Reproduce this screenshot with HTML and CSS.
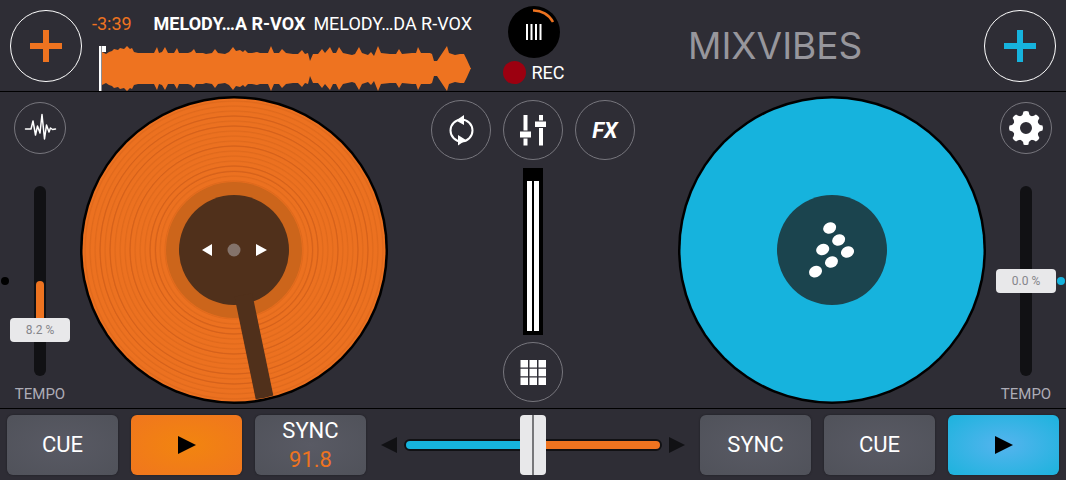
FILE: index.html
```
<!DOCTYPE html>
<html lang="en">

<head>
  <meta charset="UTF-8">
  <meta name="viewport" content="width=device-width, initial-scale=1">
  <title>Mixvibes</title>
  <link rel="stylesheet" href="styles.css">
</head>

<body>
  <header class="topbar">
    <div class="deck-info">
      <button class="add add-a" type="button" aria-label="Load track on deck A">
        <svg width="32" height="32" viewBox="0 0 32 32"><path d="M16 0v32M0 16h32" /></svg>
      </button>
      <div class="track">
        <div class="track-text">
          <span class="time">-3:39</span>
          <strong>MELODY…A R-VOX</strong>
          <span>MELODY…DA R-VOX</span>
        </div>
        <svg class="waveform" viewBox="0 0 373 45" preserveAspectRatio="none">
          <path id="wave" fill="#ee7320" d="M3 23V6L7 8L10 6L13 5L15 3L19 4L21 2L25 3L28 0L31 3L33 2L35 6L39 7L55 7L58 1L60 7L63 6L66 1L69 7L75 7L78 2L80 7L89 7L92 6L95 3L97 7L104 7L107 8L113 7L116 3L119 7L126 8L130 6L134 1L137 5L141 4L144 6L146 4L149 7L153 7L158 6L161 7L169 7L172 0L175 7L180 7L183 3L187 7L194 8L199 8L203 4L206 8L209 7L211 15L214 8L219 8L223 3L226 7L231 1L234 7L237 7L240 1L244 7L253 9L256 8L260 1L263 7L269 9L272 6L275 10L279 0L282 7L291 8L297 8L300 3L303 8L313 7L317 7L319 1L322 7L331 7L333 8L335 15L338 15L342 9L348 0L350 7L356 9L361 8L365 8L368 14L372 23Z" />
          <use href="#wave" transform="matrix(1 0 0 -1 0 45)" />
          <path fill="#fff" d="M0 0h7v6H3v39H0z" />
          <path fill="#8d8d92" d="M2 0h1v45H2z" />
        </svg>
      </div>
    </div>

    <div class="master">
      <button class="dial" type="button" aria-label="Master volume">
        <svg width="52" height="52" viewBox="0 0 52 52">
          <path d="M25 4.500A21.500 21.500 0 0 1 45 16" fill="none" stroke="#ee7320" stroke-width="2.500" />
          <path d="M19 18v16M23.500 18v16M28 18v16M32.500 18v16" stroke="#fff" stroke-width="2" />
        </svg>
      </button>
      <button class="rec" type="button"><span class="rec-dot"></span>REC</button>
    </div>

    <div class="brand">
      <span class="logo">MIXVIBES</span>
      <button class="add add-b" type="button" aria-label="Load track on deck B">
        <svg width="32" height="32" viewBox="0 0 32 32"><path d="M16 0v32M0 16h32" /></svg>
      </button>
    </div>
  </header>

  <main class="decks">
    <section class="side side-a">
      <button class="round small" type="button" aria-label="Waveform view">
        <svg width="50" height="50" viewBox="0 0 50 50">
          <path d="M10.500 26H16L18 18L20.500 32L22.500 23L25 30L27 11.500L29.500 36L31.500 22L34 29L35.500 25L37.500 26.500L40.500 26" fill="none" stroke="#fff" stroke-width="1.500" stroke-linejoin="round" stroke-linecap="round" />
        </svg>
      </button>
      <div class="pitch" style="--value: 8.2">
        <input type="range" id="tempo-a" min="-14" max="14" step="0.1" value="8.2">
        <output for="tempo-a">8.2 %</output>
      </div>
      <label for="tempo-a">TEMPO</label>
    </section>

    <svg class="platter" viewBox="0 0 308 308" role="img" aria-label="Deck A">
      <defs>
        <radialGradient id="grooves" gradientUnits="userSpaceOnUse" cx="154" cy="154" r="5" spreadMethod="repeat">
          <stop offset="0" stop-color="#ec7120" />
          <stop offset="0.500" stop-color="#ec7120" />
          <stop offset="0.800" stop-color="#df691c" />
          <stop offset="1" stop-color="#ec7120" />
        </radialGradient>
      </defs>
      <circle cx="154" cy="154" r="154" fill="#000" />
      <circle cx="154" cy="154" r="151.500" fill="url(#grooves)" />
      <g fill="none" stroke="#d5611b">
        <circle cx="154" cy="154" r="78.500" />
        <circle cx="154" cy="154" r="84" />
        <circle cx="154" cy="154" r="104" />
        <circle cx="154" cy="154" r="124" />
        <circle cx="154" cy="154" r="134" />
      </g>
      <circle cx="154" cy="154" r="68" fill="#cc651b" />
      <circle cx="154" cy="154" r="55" fill="#50301b" />
      <path d="M145 200h18v104.500q-9 1-18 0z" fill="#50301b" transform="rotate(-11.700 154 154)" />
      <circle cx="154" cy="154" r="6.500" fill="#84736b" />
      <path d="M122 154l10-6v12zM187 154l-11-6v12z" fill="#fff" />
    </svg>

    <section class="mixer">
      <div class="tools">
        <button class="round" type="button" aria-label="Loop">
          <svg width="60" height="60" viewBox="0 0 60 60">
            <circle cx="30.500" cy="30.500" r="11" fill="none" stroke="#fff" stroke-width="2" />
            <path d="M25 20.500L33 15v10zM35 40L27 45.500V35z" fill="#fff" />
          </svg>
        </button>
        <button class="round" type="button" aria-label="Equalizer">
          <svg width="60" height="60" viewBox="0 0 60 60" fill="#fff">
            <path d="M20.500 15h4v15.500h-4zM17 31.500h11v6H17zM20.500 38.500h4v7h-4zM36 15h4v5.500h-4zM32 21.500h11v5.500H32zM36 28h4v17.500h-4z" />
          </svg>
        </button>
        <button class="round fx" type="button">FX</button>
      </div>
      <div class="meter"><span></span><span></span></div>
      <button class="round" type="button" aria-label="Sampler pads">
        <svg width="60" height="60" viewBox="0 0 60 60" fill="#fff">
          <path d="M17.500 18h7.500v7.500h-7.500zM26.500 18h7.500v7.500h-7.500zM35.500 18h7.500v7.500h-7.500zM17.500 26.700h7.500v7.500h-7.500zM26.500 26.700h7.500v7.500h-7.500zM35.500 26.700h7.500v7.500h-7.500zM17.500 35.500h7.500v7.500h-7.500zM26.500 35.500h7.500v7.500h-7.500zM35.500 35.500h7.500v7.500h-7.500z" />
        </svg>
      </button>
    </section>

    <svg class="platter" viewBox="0 0 308 308" role="img" aria-label="Deck B">
      <circle cx="154" cy="154" r="154" fill="#000" />
      <circle cx="154" cy="154" r="151.500" fill="#16b3dd" />
      <circle cx="154" cy="154" r="55" fill="#1b444e" />
      <g fill="#fff">
        <ellipse cx="151.700" cy="132" rx="6.700" ry="5.600" transform="rotate(-25 151.700 132)" />
        <ellipse cx="160.700" cy="144" rx="6.700" ry="5.600" transform="rotate(-25 160.700 144)" />
        <ellipse cx="144.700" cy="153.500" rx="6.700" ry="5.600" transform="rotate(-25 144.700 153.500)" />
        <ellipse cx="169.500" cy="156" rx="6.700" ry="5.600" transform="rotate(-25 169.500 156)" />
        <ellipse cx="153.500" cy="166" rx="6.700" ry="5.600" transform="rotate(-25 153.500 166)" />
        <ellipse cx="137.500" cy="175.700" rx="6.700" ry="5.600" transform="rotate(-25 137.500 175.700)" />
      </g>
    </svg>

    <section class="side side-b">
      <button class="round small" type="button" aria-label="Settings">
        <svg width="50" height="50" viewBox="-25 -25 50 50">
          <circle r="9.500" fill="none" stroke="#fff" stroke-width="7" />
          <g fill="#fff">
            <path id="tooth" d="M-5.500 -11.500Q-2.800 -13 -2.500 -16.500Q0 -17.500 2.500 -16.500Q2.800 -13 5.500 -11.500z" />
            <use href="#tooth" transform="rotate(45)" />
            <use href="#tooth" transform="rotate(90)" />
            <use href="#tooth" transform="rotate(135)" />
            <use href="#tooth" transform="rotate(180)" />
            <use href="#tooth" transform="rotate(225)" />
            <use href="#tooth" transform="rotate(270)" />
            <use href="#tooth" transform="rotate(315)" />
          </g>
        </svg>
      </button>
      <div class="pitch" style="--value: 0">
        <input type="range" id="tempo-b" min="-14" max="14" step="0.1" value="0">
        <output for="tempo-b">0.0 %</output>
      </div>
      <label for="tempo-b">TEMPO</label>
    </section>
  </main>

  <footer class="transport">
    <div class="pads">
      <button class="pad" type="button">CUE</button>
      <button class="pad play-a" type="button" aria-label="Play deck A">
        <svg width="18" height="18" viewBox="0 0 18 18"><path d="M0 0l18 9l-18 9z" /></svg>
      </button>
      <button class="pad" type="button">SYNC<span class="bpm">91.8</span></button>
    </div>

    <div class="crossfader">
      <button class="nudge" type="button" aria-label="Fade left">
        <svg width="16" height="16" viewBox="0 0 16 16"><path d="M16 0v16L0 8z" /></svg>
      </button>
      <input type="range" class="fader" min="0" max="100" value="50" aria-label="Crossfader">
      <button class="nudge" type="button" aria-label="Fade right">
        <svg width="16" height="16" viewBox="0 0 16 16"><path d="M0 0v16l16-8z" /></svg>
      </button>
    </div>

    <div class="pads">
      <button class="pad" type="button">SYNC</button>
      <button class="pad" type="button">CUE</button>
      <button class="pad play-b" type="button" aria-label="Play deck B">
        <svg width="18" height="18" viewBox="0 0 18 18"><path d="M0 0l18 9l-18 9z" /></svg>
      </button>
    </div>
  </footer>
</body>

</html>
```
FILE: styles.css
```
* {
  box-sizing: border-box;
}

body {
  margin: 0;
  min-height: 100vh;
  display: flex;
  flex-direction: column;
  background: #2e2d35;
  color: #fff;
  font-family: Roboto, 'Liberation Sans', sans-serif;
  font-size: 18px;
}

button {
  display: flex;
  align-items: center;
  justify-content: center;
  padding: 0;
  border: 0;
  background: none;
  color: inherit;
  font: inherit;
  cursor: pointer;
}

svg {
  display: block;
}

/* top bar */

.topbar {
  display: grid;
  grid-template-columns: 1fr 60px 1fr;
  height: 92px;
  border-bottom: 1px solid #000;
}

.deck-info {
  display: flex;
  align-items: center;
  gap: 10px;
  padding: 0 32px 0 10px;
}

.add {
  flex: none;
  width: 72px;
  height: 72px;
  border: 1px solid #fff;
  border-radius: 50%;
}

.add path {
  fill: none;
  stroke-width: 6px;
}

.add-a path {
  stroke: #ee7320;
}

.add-b path {
  stroke: #16b3dd;
}

.track {
  flex: 1;
  align-self: stretch;
  display: flex;
  flex-direction: column;
  justify-content: flex-end;
}

.track-text {
  display: flex;
  line-height: 22px;
  margin-bottom: 11px;
  white-space: nowrap;
}

.track-text strong {
  margin: 0 8px 0 auto;
}

.time {
  color: #ee7320;
}

.waveform {
  height: 45px;
  margin-left: 7px;
}

.master {
  display: flex;
  flex-direction: column;
  align-items: center;
  padding-top: 6px;
}

.dial {
  width: 52px;
  height: 52px;
  border-radius: 50%;
  background: #000;
}

.rec {
  gap: 5px;
  height: 28px;
}

.rec-dot {
  width: 23px;
  height: 23px;
  border-radius: 50%;
  background: #9c0010;
}

.brand {
  display: flex;
  align-items: center;
  justify-content: space-between;
  padding: 0 10px 0 124px;
}

.logo {
  color: #97969c;
  font-family: Inter, sans-serif;
  font-size: 37px;
  font-weight: 400;
}

/* decks */

.decks {
  flex: 1;
  display: grid;
  grid-template-columns: 80px 1fr 290px 1fr 80px;
  align-items: center;
  padding: 4px 0;
}

.platter {
  width: 100%;
}

.side {
  position: relative;
  display: flex;
  flex-direction: column;
  align-items: center;
  align-self: stretch;
  padding-top: 6px;
}

.side label {
  margin-top: 8px;
  color: #adacb6;
  font-size: 15px;
  line-height: 20px;
}

.round {
  width: 60px;
  height: 60px;
  border: 1px solid #77767d;
  border-radius: 50%;
}

.round svg {
  flex: none;
}

.small {
  width: 52px;
  height: 52px;
}

.fx {
  font-size: 22px;
  font-weight: 700;
  font-style: italic;
}

.pitch {
  position: relative;
  width: 100%;
  height: 190px;
  margin-top: 32px;
}

/* rail */
.pitch::before {
  content: '';
  position: absolute;
  inset: 0 34px;
  border-radius: 6px;
  background: #111114;
}

/* filled part, from the middle down to the thumb */
.pitch::after {
  content: '';
  position: absolute;
  top: 50%;
  left: 36px;
  width: 8px;
  height: calc(var(--value) * 6px);
  border-radius: 4px 4px 0 0;
  background: #ee7320;
}

.pitch input {
  appearance: none;
  position: absolute;
  z-index: 1;
  top: 0;
  left: 10px;
  width: 60px;
  height: 190px;
  margin: 0;
  background: none;
  writing-mode: vertical-lr;
}

.pitch input::-webkit-slider-thumb {
  appearance: none;
  width: 60px;
  height: 24px;
  border-radius: 4px;
  background: #e8e8ea;
}

.pitch output {
  position: absolute;
  z-index: 2;
  top: calc(83px + var(--value) * 6px);
  left: 10px;
  width: 60px;
  color: #85858a;
  font-size: 12px;
  line-height: 24px;
  text-align: center;
  pointer-events: none;
}

/* zero mark at the screen edge */
.side::after {
  content: '';
  position: absolute;
  top: 181px;
  width: 8px;
  height: 8px;
  border-radius: 50%;
}

.side-a::after {
  left: 1px;
  background: #000;
}

.side-b::after {
  right: 1px;
  background: #16b3dd;
}

.mixer {
  display: flex;
  flex-direction: column;
  align-items: center;
  justify-content: space-between;
  align-self: stretch;
  padding: 4px 0 2px;
}

.tools {
  display: flex;
  gap: 12px;
}

.meter {
  display: flex;
  justify-content: center;
  gap: 2px;
  width: 20px;
  height: 167px;
  padding: 13px 0 4px;
  background: #000;
}

.meter span {
  width: 5px;
  background: #fff;
}

/* transport */

.transport {
  display: flex;
  align-items: center;
  height: 72px;
  padding: 0 7px;
  border-top: 1px solid #000;
}

.pads {
  display: flex;
  gap: 13px;
}

.pad {
  flex-direction: column;
  width: 111px;
  height: 60px;
  border-radius: 6px;
  background: radial-gradient(#595a64, #50525a);
  box-shadow: 0 0 2px #1c1c20;
  font-size: 22px;
  line-height: 29px;
}

.bpm {
  color: #ee7320;
}

.play-a {
  background: radial-gradient(#f2850f, #f0761e);
}

.play-b {
  background: radial-gradient(#55b4ee, #1cb3dd);
}

.crossfader {
  flex: 1;
  display: flex;
  align-items: center;
  gap: 7px;
  padding: 0 15px;
}

.nudge {
  flex: none;
}

.nudge path {
  fill: #111114;
}

.fader {
  appearance: none;
  flex: 1;
  min-width: 0;
  height: 12px;
  margin: 0;
  border: 2px solid #111114;
  border-radius: 6px;
  background: linear-gradient(90deg, #16b3dd 50%, #ee7320 50%);
}

.fader::-webkit-slider-thumb {
  appearance: none;
  width: 26px;
  height: 60px;
  border-radius: 4px;
  background: linear-gradient(90deg, #e8e8ea 12px, #77777a 12px, #77777a 14px, #e8e8ea 14px);
}
```
